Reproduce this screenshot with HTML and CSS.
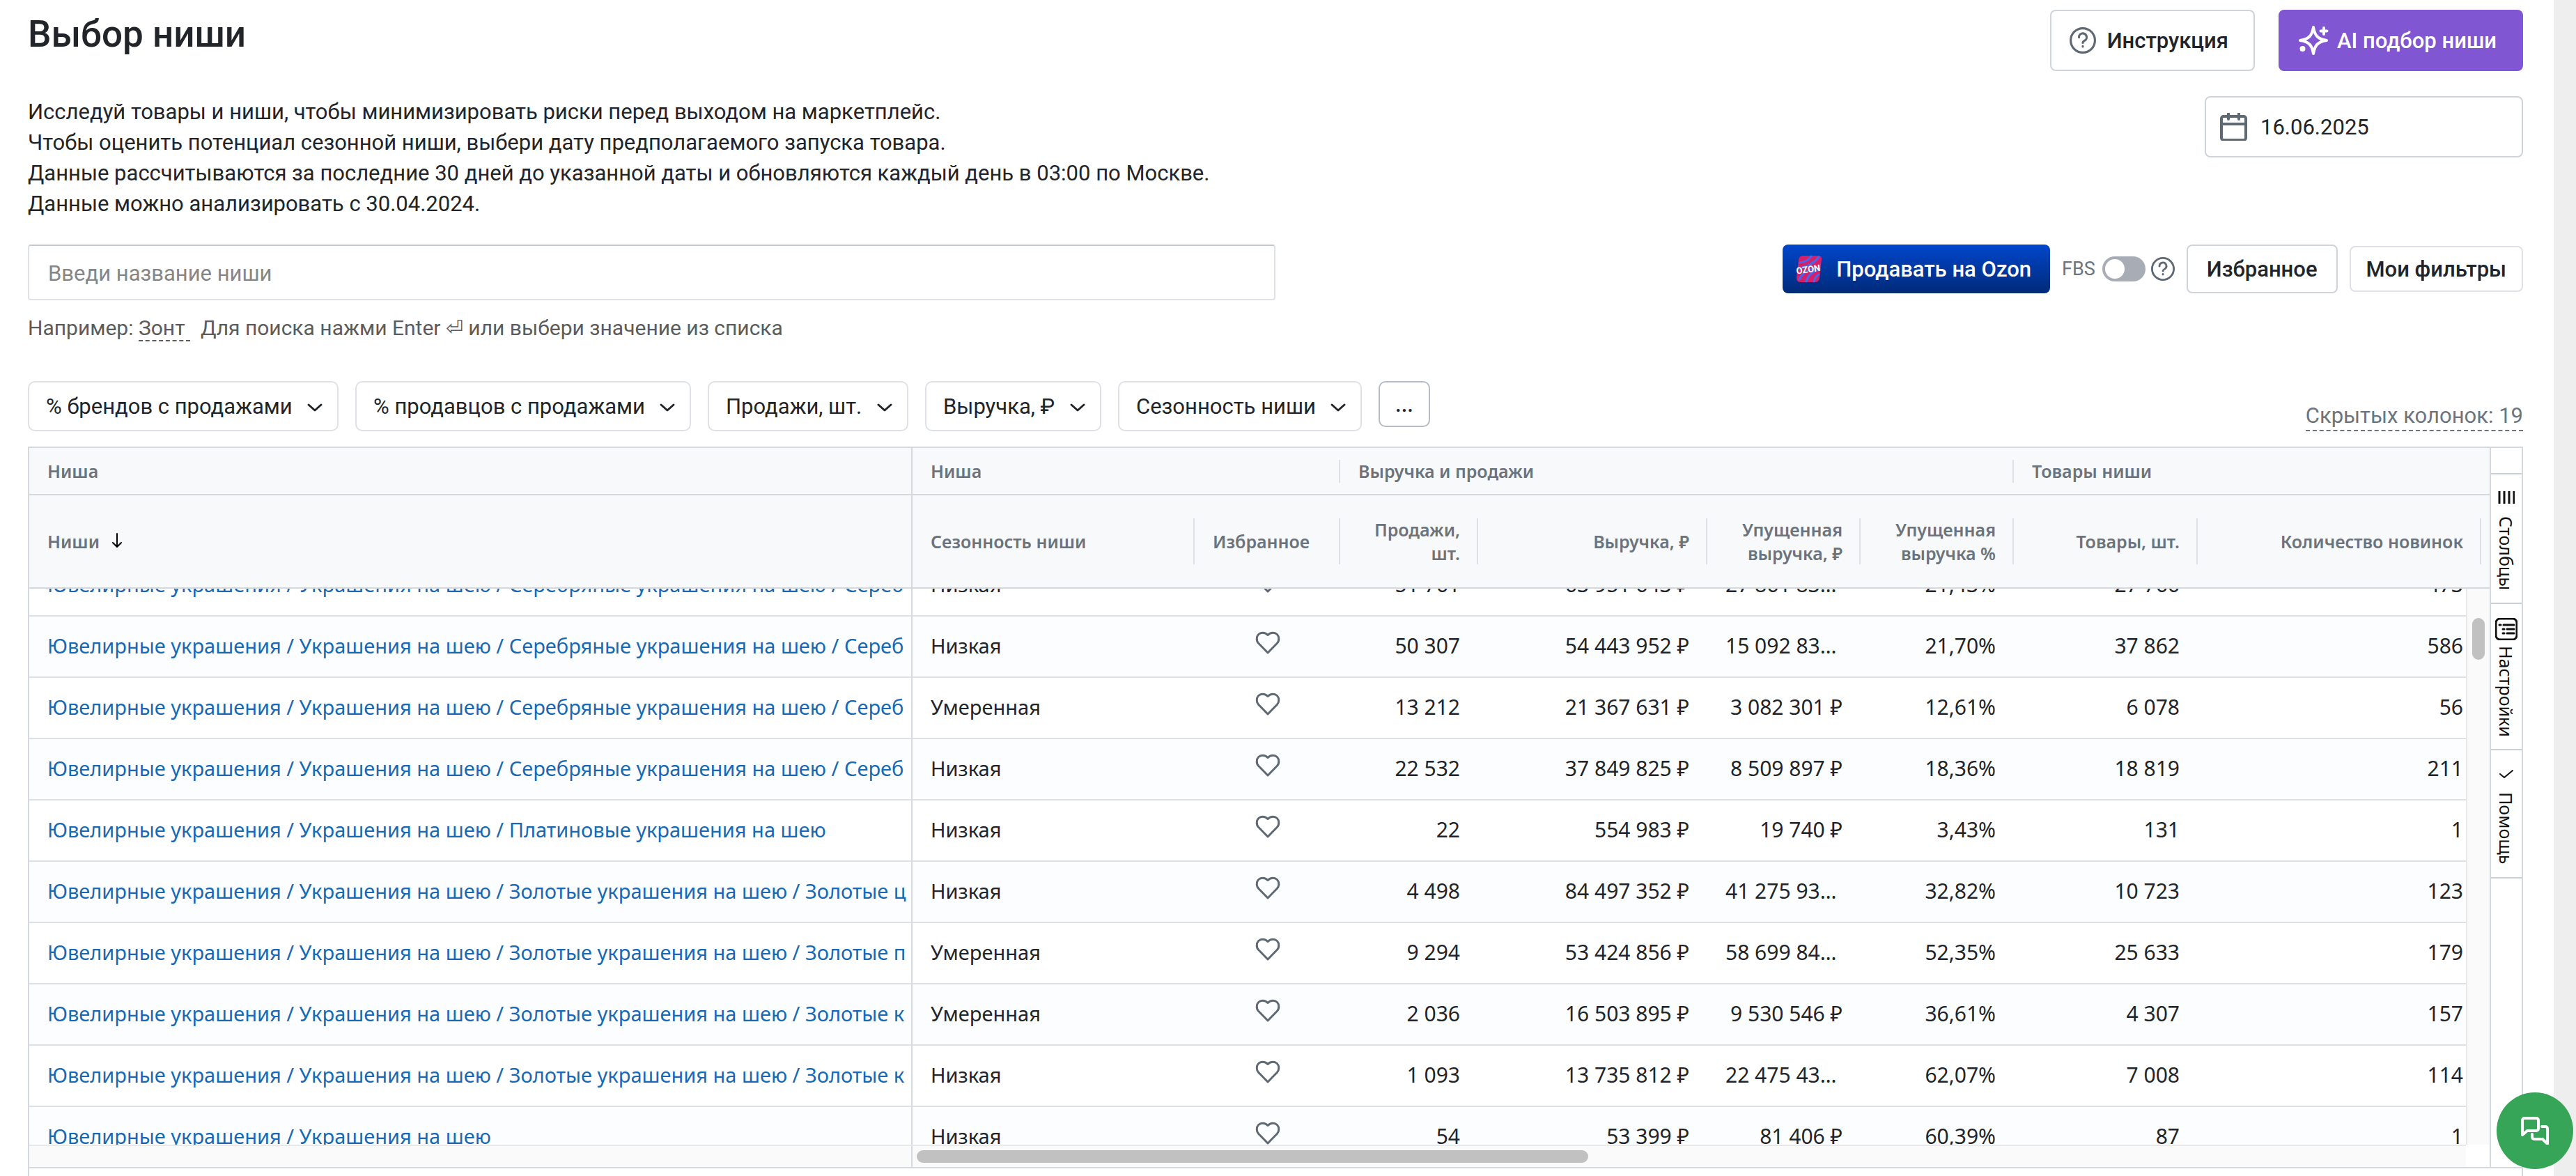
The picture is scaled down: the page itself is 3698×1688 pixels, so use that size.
FILE: index.html
```html
<!DOCTYPE html>
<html lang="ru">

<head>
    <meta charset="UTF-8">
    <meta name="viewport" content="width=device-width, initial-scale=1.0">
    <title>Выбор ниши</title>
    <link rel="stylesheet" href="styles.css">
</head>

<body>
<!-- иконки -->
<svg class="sprite" aria-hidden="true">
    <symbol id="heart" viewBox="0 0 24 24">
        <path d="M12 22L3.200 13A6 6 0 0 1 1.500 8.500C1.500 5 4 2.800 7 2.800c2.200 0 3.800.8 5 2.200 1.200-1.400 2.800-2.200 5-2.200 3 0 5.500 2.200 5.500 5.700a6 6 0 0 1-1.700 4.500z"/>
    </symbol>
    <symbol id="question" viewBox="0 0 24 24">
        <circle cx="12" cy="12" r="11"/>
        <path d="M8.500 9.300a3.500 3.500 0 1 1 5.300 2.800c-1.200.7-1.800 1.100-1.800 2.100"/>
        <path d="M12 17.300v.4"/>
    </symbol>
    <symbol id="chevron" viewBox="0 0 24 24">
        <path d="M3 8l9 8 9-8"/>
    </symbol>
</svg>

<main class="page">
    <header class="page-header">
        <div class="intro">
            <h1 class="title">Выбор ниши</h1>
            <p class="description">
                Исследуй товары и ниши, чтобы минимизировать риски перед выходом на маркетплейс.<br>
                Чтобы оценить потенциал сезонной ниши, выбери дату предполагаемого запуска товара.<br>
                Данные рассчитываются за последние 30 дней до указанной даты и обновляются каждый день в 03:00 по Москве.<br>
                Данные можно анализировать с 30.04.2024.
            </p>
        </div>
        <div class="header-actions">
            <div class="header-buttons">
                <button class="btn btn-large" type="button">
                    <svg class="icon"><use href="#question"/></svg>
                    Инструкция
                </button>
                <button class="btn btn-large btn-ai" type="button">
                    <svg class="icon icon-ai" viewBox="0 0 44 44">
                        <path d="M22 3c2 12 6 17 19 19-13 2-17 7-19 19-2-12-6-17-19-19 13-2 17-7 19-19z"/>
                        <path d="M37 4v9M32.500 8.500h9"/>
                        <circle cx="6.500" cy="34" r="2"/>
                    </svg>
                    AI подбор ниши
                </button>
            </div>
            <label class="date">
                <svg class="icon icon-date" viewBox="0 0 40 40">
                    <rect x="2" y="5" width="35" height="34" rx="3"/>
                    <path d="M2 16h35M12 1v8M27 1v8"/>
                </svg>
                <input type="text" value="16.06.2025" aria-label="Дата">
            </label>
        </div>
    </header>

    <section class="search-row">
        <div class="search">
            <input class="search-input" type="text" placeholder="Введи название ниши" aria-label="Название ниши">
            <p class="hint">Например: <a href="#">Зонт&nbsp;</a>&nbsp; Для поиска нажми Enter ⏎ или выбери значение из списка</p>
        </div>
        <div class="search-actions">
            <button class="btn btn-ozon" type="button">
                <svg class="ozon-logo" viewBox="0 0 40 40">
                    <path class="ozon-box" d="M11 1h22q6 0 5 6l-3 26q-1 6-6 6H8q-6 0-6-6l3-26q1-6 6-6z"/>
                    <path class="ozon-stripe" d="M7 11C14 10 20 7 23 2M4 20C16 17 28 11 34 3M6 35c4-8 12-14 24-17M16 38c2-8 8-14 19-18M27 38c1-4 3-8 7-10"/>
                    <text x="19" y="25" transform="rotate(-8 20 22)" text-anchor="middle">OZON</text>
                </svg>
                Продавать на Ozon
            </button>
            <label class="fbs">FBS <input class="switch" type="checkbox"></label>
            <svg class="icon icon-help"><use href="#question"/></svg>
            <button class="btn" type="button">Избранное</button>
            <button class="btn btn-filters" type="button">Мои фильтры</button>
        </div>
    </section>

    <section class="filters">
        <div class="filter-list">
            <label class="filter">
                <select aria-label="% брендов с продажами"><option>% брендов с продажами</option></select>
                <svg class="chevron"><use href="#chevron"/></svg>
            </label>
            <label class="filter">
                <select aria-label="% продавцов с продажами"><option>% продавцов с продажами</option></select>
                <svg class="chevron"><use href="#chevron"/></svg>
            </label>
            <label class="filter">
                <select aria-label="Продажи, шт."><option>Продажи, шт.</option></select>
                <svg class="chevron"><use href="#chevron"/></svg>
            </label>
            <label class="filter">
                <select aria-label="Выручка"><option>Выручка, ₽</option></select>
                <svg class="chevron"><use href="#chevron"/></svg>
            </label>
            <label class="filter">
                <select aria-label="Сезонность ниши"><option>Сезонность ниши</option></select>
                <svg class="chevron"><use href="#chevron"/></svg>
            </label>
            <button class="btn btn-more" type="button">...</button>
        </div>
        <a class="hidden-columns" href="#">Скрытых колонок: 19</a>
    </section>

    <section class="grid">
        <div class="grid-body">
            <div class="grid-main">
                <div class="viewport" id="viewport">
                    <table class="niches">
                        <colgroup>
                            <col class="col-name">
                            <col class="col-season">
                            <col class="col-fav">
                            <col class="col-sales">
                            <col class="col-revenue">
                            <col class="col-lost">
                            <col class="col-lost">
                            <col class="col-goods">
                            <col>
                        </colgroup>
                        <thead>
                        <tr class="groups">
                            <th>Ниша</th>
                            <th colspan="2" class="sep">Ниша</th>
                            <th colspan="4" class="sep">Выручка и продажи</th>
                            <th colspan="2">Товары ниши</th>
                        </tr>
                        <tr class="columns">
                            <th>Ниши
                                <svg class="sort" viewBox="0 0 18 22"><path d="M9 1v19M3 14l6 6 6-6"/></svg>
                            </th>
                            <th class="sep">Сезонность ниши</th>
                            <th class="sep">Избранное</th>
                            <th class="sep num">Продажи, шт.</th>
                            <th class="sep num">Выручка, ₽</th>
                            <th class="sep num">Упущенная выручка, ₽</th>
                            <th class="sep num">Упущенная выручка %</th>
                            <th class="sep num">Товары, шт.</th>
                            <th class="sep sep-last num">Количество новинок</th>
                        </tr>
                        </thead>
                        <tbody id="rows"></tbody>
                    </table>
                </div>
                <div class="scroll-y"><span class="thumb"></span></div>
                <div class="scroll-x"><div class="pinned"></div><div class="track"><span class="thumb"></span></div></div>
            </div>
            <aside class="side">
                <button type="button">
                    <svg class="side-icon side-icon-columns" viewBox="0 0 24 24"><path d="M2 4v18M9 4v18M16 4v18M23 4v18"/></svg>
                    Столбцы
                </button>
                <button type="button">
                    <svg class="side-icon side-icon-settings" viewBox="0 0 32 32">
                        <rect x="1" y="1" width="30" height="30" rx="6"/>
                        <path d="M6 10h2M12 10h15M11 16h2M17 16h10M11 22h2M17 22h10"/>
                    </svg>
                    Настройки
                </button>
                <button type="button">
                    <svg class="side-icon side-icon-check" viewBox="0 0 24 24"><path d="M3 14l6 5L21 9"/></svg>
                    Помощь
                </button>
            </aside>
        </div>
        <div class="grid-footer"></div>
    </section>
</main>

<button class="chat" type="button" aria-label="Чат">
    <svg viewBox="0 0 40 40">
        <path d="M2 26V5a3 3 0 0 1 3-3h17a3 3 0 0 1 3 3v12a3 3 0 0 1-3 3H9z"/>
        <path d="M30 14h5a3 3 0 0 1 3 3v22l-7-7H19a3 3 0 0 1-3-3v-4"/>
    </svg>
</button>

<script>
    const neck = "Ювелирные украшения / Украшения на шею"
    const silver = neck + " / Серебряные украшения на шею / Сереб"
    const gold = neck + " / Золотые украшения на шею / Золотые "

    const data = [
        [silver, "Низкая", "51 761", "63 951 643 ₽", "27 861 833 ₽", "21,43%", "27 766", "473"],
        [silver, "Низкая", "50 307", "54 443 952 ₽", "15 092 833 ₽", "21,70%", "37 862", "586"],
        [silver, "Умеренная", "13 212", "21 367 631 ₽", "3 082 301 ₽", "12,61%", "6 078", "56"],
        [silver, "Низкая", "22 532", "37 849 825 ₽", "8 509 897 ₽", "18,36%", "18 819", "211"],
        [neck + " / Платиновые украшения на шею", "Низкая", "22", "554 983 ₽", "19 740 ₽", "3,43%", "131", "1"],
        [gold + "ц", "Низкая", "4 498", "84 497 352 ₽", "41 275 933 ₽", "32,82%", "10 723", "123"],
        [gold + "п", "Умеренная", "9 294", "53 424 856 ₽", "58 699 843 ₽", "52,35%", "25 633", "179"],
        [gold + "к", "Умеренная", "2 036", "16 503 895 ₽", "9 530 546 ₽", "36,61%", "4 307", "157"],
        [gold + "к", "Низкая", "1 093", "13 735 812 ₽", "22 475 433 ₽", "62,07%", "7 008", "114"],
        [neck, "Низкая", "54", "53 399 ₽", "81 406 ₽", "60,39%", "87", "1"]
    ]

    const heart = '<button class="fav" type="button" aria-label="В избранное"><svg><use href="#heart"/></svg></button>'

    document.getElementById("rows").innerHTML = data.map(([name, season, ...nums]) =>
        `<tr><td class="name"><a href="#">${name}</a></td><td>${season}</td><td class="center">${heart}</td>` +
        nums.map(n => `<td class="num">${n}</td>`).join("") + "</tr>"
    ).join("")

    // список прокручен на половину первой строки
    document.getElementById("viewport").scrollTop = 48
</script>
</body>

</html>
```
FILE: styles.css
```css
* {
    box-sizing: border-box;
}

body {
    margin: 0;
    height: 100vh;
    overflow: hidden;
    background-color: #fff;
    border-right: 32px solid #eee;
    font-family: Roboto, sans-serif;
    font-size: 31px;
    color: #212529;
}

h1, p {
    margin: 0;
}

button, input, select {
    font: inherit;
    color: inherit;
}

svg {
    flex: none;
    fill: none;
    stroke: currentColor;
    stroke-linecap: round;
    stroke-linejoin: round;
}

.sprite {
    position: absolute;
    width: 0;
    height: 0;
}

.page {
    padding: 14px 44px 0 40px;
}

/* header */
.page-header {
    display: flex;
    justify-content: space-between;
    height: 337px;
}

.title {
    font-size: 53px;
    font-weight: 500;
    line-height: 70px;
}

.description {
    margin-top: 55px;
    line-height: 44px;
}

.header-actions {
    display: flex;
    flex-direction: column;
    align-items: flex-end;
    gap: 36px;
}

.header-buttons {
    display: flex;
    gap: 34px;
}

.btn {
    display: flex;
    align-items: center;
    justify-content: center;
    height: 70px;
    padding: 0 27px;
    border: 2px solid #ced4da;
    border-radius: 8px;
    background-color: #fff;
    font-weight: 500;
    white-space: nowrap;
    cursor: pointer;
}

.btn-large {
    height: 88px;
    padding: 0 36px 0 26px;
    gap: 16px;
}

.icon {
    width: 38px;
    height: 38px;
    color: #5f6973;
    stroke-width: 2;
}

.btn-ai {
    border-color: #8056d3;
    background-color: #8056d3;
    color: #fff;
    gap: 12px;
}

.icon-ai {
    width: 44px;
    height: 44px;
    color: #fff;
    stroke-width: 4;
}

.date {
    display: flex;
    align-items: center;
    gap: 18px;
    width: 457px;
    height: 88px;
    padding: 0 20px;
    border: 2px solid #ced4da;
    border-radius: 8px;
}

.icon-date {
    width: 40px;
    height: 40px;
    stroke-width: 4;
}

.date input {
    min-width: 0;
    padding: 0;
    border: 0;
    outline: 0;
    background: none;
}

/* search */
.search-row {
    display: flex;
    justify-content: space-between;
    height: 196px;
}

.search {
    width: 50%;
}

.search-input {
    display: block;
    width: 100%;
    height: 80px;
    padding: 2px 27px 0;
    border: 2px solid #dee2e6;
    border-top-color: #c3c9ce;
    border-radius: 4px;
    outline: 0;
}

.search-input::placeholder {
    color: #868686;
}

.hint {
    margin-top: 18px;
    font-size: 30px;
    line-height: 44px;
    color: #5c5c5c;
}

.hint a {
    color: inherit;
    text-decoration: none;
    border-bottom: 2px dashed #5c5c5c;
}

.search-actions {
    display: flex;
    align-items: center;
    gap: 17px;
    height: 70px;
}

.btn-ozon {
    padding: 0 27px 0 18px;
    gap: 19px;
    border: 0;
    background: linear-gradient(#0046cc, #002a78);
    color: #fff;
}

.ozon-logo {
    width: 40px;
    height: 40px;
}

.ozon-box {
    fill: #d81e68;
    stroke: none;
}

.ozon-stripe {
    stroke: #4a66e8;
    stroke-width: 3;
}

.ozon-logo text {
    font: bold 13px Roboto, sans-serif;
    fill: #fff;
    stroke: none;
}

.fbs {
    display: flex;
    align-items: center;
    gap: 10px;
    font-size: 27px;
    color: #6c757d;
}

.switch {
    appearance: none;
    display: flex;
    width: 62px;
    height: 36px;
    margin: 0;
    padding: 4px;
    border-radius: 18px;
    background-color: #a7acb5;
}

.switch::before {
    content: "";
    width: 28px;
    height: 28px;
    border-radius: 50%;
    background-color: #fff;
}

.icon-help {
    width: 34px;
    height: 34px;
    margin-left: -9px;
}

.btn-filters {
    height: 66px;
    padding: 0 22px;
    border-color: #dee2e6;
}

/* filters */
.filters {
    display: flex;
    justify-content: space-between;
    height: 94px;
}

.filter-list {
    display: flex;
    gap: 24px;
}

.filter {
    position: relative;
    height: 72px;
}

.filter select {
    appearance: none;
    height: 72px;
    padding: 0 64px 0 24px;
    border: 2px solid #dee2e6;
    border-radius: 10px;
    background-color: #fff;
}

.chevron {
    position: absolute;
    top: 26px;
    right: 22px;
    width: 24px;
    height: 24px;
    stroke-width: 3;
    pointer-events: none;
}

.btn-more {
    width: 74px;
    height: 66px;
    padding: 0;
    border-color: #b4bcc6;
    border-radius: 10px;
}

.hidden-columns {
    align-self: flex-start;
    margin-top: 30px;
    line-height: 40px;
    border-bottom: 2px dashed #6c757d;
    color: #6c757d;
    text-decoration: none;
}

/* table */
.grid {
    border: 2px solid #d3d9df;
    border-bottom: 0;
    font-family: "Noto Sans", sans-serif;
    font-size: 29px;
}

.grid-body {
    display: flex;
    border-bottom: 2px solid #d3d9df;
}

.grid-main {
    position: relative;
    flex: 1;
    min-width: 0;
}

.viewport {
    height: 1000px;
    overflow: hidden;
}

.niches {
    width: 100%;
    table-layout: fixed;
    border-collapse: separate;
    border-spacing: 0;
}

.col-name {
    width: 1268px;
}

.col-season {
    width: 405px;
}

.col-fav {
    width: 209px;
}

.col-sales {
    width: 198px;
}

.col-revenue {
    width: 329px;
}

.col-lost {
    width: 220px;
}

.col-goods {
    width: 264px;
}

.niches thead {
    position: sticky;
    top: 0;
    z-index: 1;
}

.niches th {
    position: relative;
    padding: 0 26px;
    border-bottom: 2px solid #d3d9df;
    background-color: #f8f9fb;
    font-size: 25px;
    font-weight: 600;
    line-height: 34px;
    color: #6b737c;
    text-align: left;
}

.groups th {
    height: 68px;
}

.columns th {
    height: 134px;
}

.niches th:first-child,
.niches td:first-child {
    border-right: 2px solid #d3d9df;
}

.niches .num {
    text-align: right;
}

.sep::after {
    content: "";
    position: absolute;
    top: 25%;
    right: 0;
    width: 2px;
    height: 50%;
    background-color: #dde1e5;
}

.niches .sep-last {
    padding-right: 38px;
}

.sep-last::after {
    right: 12px;
}

.sort {
    width: 18px;
    height: 22px;
    margin-left: 10px;
    stroke: #000;
    stroke-width: 2;
}

.niches td {
    height: 88px;
    padding: 0 26px 4px;
    border-bottom: 2px solid #dee0e4;
    overflow: hidden;
    white-space: nowrap;
    text-overflow: ellipsis;
}

td.num {
    font-size: 30px;
}

.niches td:last-child {
    padding-right: 38px;
}

.niches tr:nth-child(even) td {
    background-color: #fcfdfe;
}

.niches .name {
    padding-right: 0;
    text-overflow: clip;
}

.name a {
    color: #1769b5;
    text-decoration: none;
}

.niches .center {
    text-align: center;
}

.fav {
    padding: 0;
    border: 0;
    background: none;
}

.fav svg {
    display: block;
    width: 36px;
    height: 36px;
    stroke: #5f6973;
    stroke-width: 2;
}

/* scrollbars */
.thumb {
    display: block;
    border-radius: 9px;
    background-color: #c1c1c1;
}

.scroll-y {
    position: absolute;
    top: 202px;
    right: 0;
    bottom: 32px;
    width: 34px;
    padding: 42px 7px;
    border-left: 2px solid #e8e8e8;
    background-color: #fafafa;
}

.scroll-y .thumb {
    height: 60px;
}

.scroll-x {
    display: flex;
    height: 32px;
    margin-right: 34px;
    border-top: 2px solid #e8e8e8;
    background-color: #fafafa;
}

.pinned {
    width: 1268px;
    border-right: 2px solid #d3d9df;
}

.track {
    flex: 1;
    padding: 6px;
}

.track .thumb {
    width: 964px;
    height: 18px;
}

/* side panel */
.side {
    width: 46px;
    padding-top: 36px;
    border-left: 2px solid #d3d9df;
}

.side button {
    display: flex;
    align-items: center;
    gap: 16px;
    width: 100%;
    height: 210px;
    padding: 20px 0 0;
    border: 0;
    border-top: 2px solid #c9d0d8;
    background: none;
    font-size: 25px;
    color: #111;
    writing-mode: vertical-rl;
}

.side button:first-child {
    height: 186px;
}

.side button:last-child {
    height: 186px;
    border-bottom: 2px solid #c9d0d8;
}

.side-icon {
    width: 24px;
    height: 24px;
    stroke-width: 3;
}

.side-icon-columns {
    stroke-linecap: butt;
}

.side-icon-settings {
    width: 32px;
    height: 32px;
    margin-bottom: -8px;
}

.side-icon-check {
    stroke-width: 2;
}

.grid-footer {
    height: 80px;
}

.chat {
    position: fixed;
    right: 4px;
    bottom: 10px;
    display: flex;
    align-items: center;
    justify-content: center;
    width: 110px;
    height: 110px;
    border: 0;
    border-radius: 50%;
    background-color: #36a557;
    color: #fff;
    cursor: pointer;
}

.chat svg {
    width: 40px;
    height: 40px;
    stroke-width: 4;
}
```
